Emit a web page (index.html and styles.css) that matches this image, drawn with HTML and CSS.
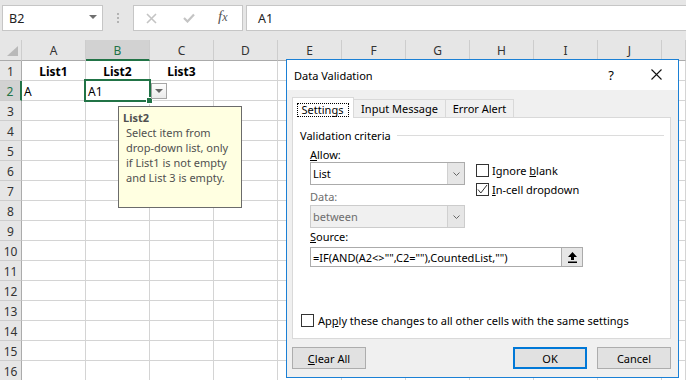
FILE: index.html
```html
<!DOCTYPE html>
<html>
<head>
<meta charset="utf-8">
<link rel="stylesheet" href="styles.css">
</head>
<body>
<div class="topbar">
  <div class="namebox"><span>B2</span><span class="nb-arrow"></span></div>
  <div class="grip"><i></i><i></i><i></i></div>
  <div class="fxbox">
    <svg class="ic-x" width="11" height="11" viewBox="0 0 11 11"><path d="M1 1L10 10M10 1L1 10" stroke="#c4c4c4" stroke-width="1.6" fill="none"/></svg>
    <svg class="ic-check" width="12" height="10" viewBox="0 0 12 10"><path d="M1 5L4.5 8.5L11 1.5" stroke="#c4c4c4" stroke-width="2.2" fill="none"/></svg>
    <span class="fx">f<span class="fx-x">x</span></span>
  </div>
  <div class="formula">A1</div>
</div>

<div class="sheet">
  <div class="corner"><svg width="21" height="20" viewBox="0 0 21 20"><polygon points="18,6 18,16 7,16" fill="#b9b9b9"/></svg></div>
  <div class="ch">A</div><div class="ch on">B</div><div class="ch">C</div><div class="ch">D</div><div class="ch">E</div><div class="ch">F</div><div class="ch">G</div><div class="ch">H</div><div class="ch">I</div><div class="ch">J</div><div class="ch"></div>

  <div class="rh">1</div><div class="c hd">List1</div><div class="c hd">List2</div><div class="c hd">List3</div><div class="c"></div><div class="c"></div><div class="c"></div><div class="c"></div><div class="c"></div><div class="c"></div><div class="c"></div><div class="c"></div>
  <div class="rh on">2</div><div class="c tx">A</div><div class="c tx">A1</div><div class="c"></div><div class="c"></div><div class="c"></div><div class="c"></div><div class="c"></div><div class="c"></div><div class="c"></div><div class="c"></div><div class="c"></div>
  <div class="rh">3</div><div class="c"></div><div class="c"></div><div class="c"></div><div class="c"></div><div class="c"></div><div class="c"></div><div class="c"></div><div class="c"></div><div class="c"></div><div class="c"></div><div class="c"></div>
  <div class="rh">4</div><div class="c"></div><div class="c"></div><div class="c"></div><div class="c"></div><div class="c"></div><div class="c"></div><div class="c"></div><div class="c"></div><div class="c"></div><div class="c"></div><div class="c"></div>
  <div class="rh">5</div><div class="c"></div><div class="c"></div><div class="c"></div><div class="c"></div><div class="c"></div><div class="c"></div><div class="c"></div><div class="c"></div><div class="c"></div><div class="c"></div><div class="c"></div>
  <div class="rh">6</div><div class="c"></div><div class="c"></div><div class="c"></div><div class="c"></div><div class="c"></div><div class="c"></div><div class="c"></div><div class="c"></div><div class="c"></div><div class="c"></div><div class="c"></div>
  <div class="rh">7</div><div class="c"></div><div class="c"></div><div class="c"></div><div class="c"></div><div class="c"></div><div class="c"></div><div class="c"></div><div class="c"></div><div class="c"></div><div class="c"></div><div class="c"></div>
  <div class="rh">8</div><div class="c"></div><div class="c"></div><div class="c"></div><div class="c"></div><div class="c"></div><div class="c"></div><div class="c"></div><div class="c"></div><div class="c"></div><div class="c"></div><div class="c"></div>
  <div class="rh">9</div><div class="c"></div><div class="c"></div><div class="c"></div><div class="c"></div><div class="c"></div><div class="c"></div><div class="c"></div><div class="c"></div><div class="c"></div><div class="c"></div><div class="c"></div>
  <div class="rh">10</div><div class="c"></div><div class="c"></div><div class="c"></div><div class="c"></div><div class="c"></div><div class="c"></div><div class="c"></div><div class="c"></div><div class="c"></div><div class="c"></div><div class="c"></div>
  <div class="rh">11</div><div class="c"></div><div class="c"></div><div class="c"></div><div class="c"></div><div class="c"></div><div class="c"></div><div class="c"></div><div class="c"></div><div class="c"></div><div class="c"></div><div class="c"></div>
  <div class="rh">12</div><div class="c"></div><div class="c"></div><div class="c"></div><div class="c"></div><div class="c"></div><div class="c"></div><div class="c"></div><div class="c"></div><div class="c"></div><div class="c"></div><div class="c"></div>
  <div class="rh">13</div><div class="c"></div><div class="c"></div><div class="c"></div><div class="c"></div><div class="c"></div><div class="c"></div><div class="c"></div><div class="c"></div><div class="c"></div><div class="c"></div><div class="c"></div>
  <div class="rh">14</div><div class="c"></div><div class="c"></div><div class="c"></div><div class="c"></div><div class="c"></div><div class="c"></div><div class="c"></div><div class="c"></div><div class="c"></div><div class="c"></div><div class="c"></div>
  <div class="rh">15</div><div class="c"></div><div class="c"></div><div class="c"></div><div class="c"></div><div class="c"></div><div class="c"></div><div class="c"></div><div class="c"></div><div class="c"></div><div class="c"></div><div class="c"></div>
  <div class="rh">16</div><div class="c"></div><div class="c"></div><div class="c"></div><div class="c"></div><div class="c"></div><div class="c"></div><div class="c"></div><div class="c"></div><div class="c"></div><div class="c"></div><div class="c"></div>
</div>

<div class="sel"></div>
<div class="handle"></div>
<div class="dd"><span class="dd-tri"></span></div>

<div class="tip">
  <div class="tip-title">List2</div>
  <div class="tip-body">Select item from<br>drop-down list, only<br>if List1 is not empty<br>and List 3 is empty.</div>
</div>

<div class="dialog">
  <div class="dlg-title">
    <span class="dlg-name">Data Validation</span>
    <span class="dlg-help">?</span>
    <svg class="dlg-close" width="11" height="11" viewBox="0 0 11 11"><path d="M0.5 0.5L10.5 10.5M10.5 0.5L0.5 10.5" stroke="#111" stroke-width="1.1" fill="none"/></svg>
  </div>
  <div class="dlg-body">
    <div class="tabs">
      <div class="tab active"><span class="focus">Settings</span></div>
      <div class="tab t2">Input Message</div>
      <div class="tab t3">Error Alert</div>
    </div>
    <div class="panel">
      <div class="group-head"><span>Validation criteria</span><span class="rule"></span></div>
      <div class="criteria">
        <div class="col-left">
          <div class="lbl"><u>A</u>llow:</div>
          <div class="combo"><span class="combo-val">List</span><span class="combo-btn"><svg width="7" height="4" viewBox="0 0 7 4"><path d="M0.5 0.5L3.5 3.5L6.5 0.5" stroke="#666" stroke-width="1" fill="none"/></svg></span></div>
          <div class="lbl dis lbl-data">Data:</div>
          <div class="combo dis combo-data"><span class="combo-val">between</span><span class="combo-btn"><svg width="7" height="4" viewBox="0 0 7 4"><path d="M0.5 0.5L3.5 3.5L6.5 0.5" stroke="#666" stroke-width="1" fill="none"/></svg></span></div>
        </div>
        <div class="col-right">
          <div class="chk chk1"><span class="box"></span><span>Ignore <u>b</u>lank</span></div>
          <div class="chk chk2"><span class="box"><svg width="11" height="11" viewBox="0 0 11 11"><path d="M1 5.5L3.8 9L10 1" stroke="#333" stroke-width="1" fill="none"/></svg></span><span><u>I</u>n-cell dropdown</span></div>
        </div>
      </div>
      <div class="lbl lbl-src"><u>S</u>ource:</div>
      <div class="source"><span class="src-text">=IF(AND(A2&lt;&gt;"",C2=""),CountedList,"")</span><span class="src-btn"><svg width="9" height="11" viewBox="0 0 9 11"><polygon points="4.5,0 9,5 6,5 6,8 3,8 3,5 0,5" fill="#000"/><rect x="0" y="9.5" width="9" height="1.5" fill="#000"/></svg></span></div>
      <div class="chk apply"><span class="box"></span><span>Ap<u>p</u>ly these changes to all other cells with the same settings</span></div>
    </div>
    <div class="buttons">
      <button class="btn"><u>C</u>lear All</button>
      <button class="btn primary">OK</button>
      <button class="btn cancel">Cancel</button>
    </div>
  </div>
</div>
</body>
</html>
```

FILE: styles.css
```css
* { box-sizing: border-box; }
html, body { margin: 0; padding: 0; }
body {
  width: 686px;
  height: 380px;
  overflow: hidden;
  background: #fff;
  font-family: "Noto Sans", "Open Sans", sans-serif;
  color: #000;
  position: relative;
}

/* formula bar */
.topbar {
  height: 40px;
  background: #e6e6e6;
  display: flex;
  align-items: flex-start;
  padding: 5px 0 0 2px;
}
.namebox {
  width: 101px;
  height: 26px;
  background: #fff;
  border: 1px solid #c6c6c6;
  display: flex;
  align-items: center;
  justify-content: space-between;
  padding: 0 5px 0 6px;
  font-size: 12.5px;
  color: #222;
}
.nb-arrow {
  width: 0;
  height: 0;
  border-left: 4px solid transparent;
  border-right: 4px solid transparent;
  border-top: 4px solid #6f6f6f;
  margin-bottom: 3px;
}
.grip {
  margin: 8px 0 0 14px;
  width: 3px;
  display: flex;
  flex-direction: column;
  gap: 2px;
}
.grip i { display: block; width: 2px; height: 2px; background: #b3b3b3; }
.fxbox {
  margin-left: 13px;
  width: 110px;
  height: 26px;
  background: #fff;
  border: 1px solid #c6c6c6;
  display: flex;
  align-items: center;
  padding-left: 12px;
}
.ic-check { margin-left: 26px; }
.fx {
  margin-left: 23px;
  font-family: "Liberation Serif", serif;
  font-style: italic;
  font-size: 15px;
  color: #555;
  margin-top: -3px;
}
.fx-x { font-size: 12px; }
.formula {
  margin-left: 3px;
  flex: 1;
  height: 26px;
  background: #fff;
  border: 1px solid #c6c6c6;
  border-right: none;
  display: flex;
  align-items: center;
  padding-left: 11px;
  font-size: 12.5px;
  color: #222;
}

/* grid */
.sheet {
  display: grid;
  grid-template-columns: 22px repeat(10, 64px) 1fr;
  grid-template-rows: 21px;
  grid-auto-rows: 20px;
  font-size: 12px;
}
.corner, .ch {
  background: #e6e6e6;
  border-right: 1px solid #cdcdcd;
  border-bottom: 1px solid #ababab;
}
.corner svg { display: block; }
.ch {
  display: flex;
  align-items: center;
  justify-content: center;
  color: #333;
  padding-top: 1px;
}
.ch.on {
  background: #d2d2d2;
  color: #217346;
  border-bottom: 2px solid #217346;
}
.rh {
  background: #e6e6e6;
  border-right: 1px solid #ababab;
  border-bottom: 1px solid #cdcdcd;
  display: flex;
  align-items: center;
  justify-content: center;
  color: #333;
  padding-top: 1px;
}
.rh.on {
  background: #d2d2d2;
  color: #217346;
  border-right: 2px solid #217346;
}
.c {
  border-right: 1px solid #d4d4d4;
  border-bottom: 1px solid #d4d4d4;
  display: flex;
  align-items: center;
  padding-top: 2px;
  color: #000;
}
.c.hd { justify-content: center; font-weight: bold; }
.c.tx { padding-left: 2px; }

/* overlays on the sheet */
.sel {
  position: absolute;
  left: 84px;
  top: 79px;
  width: 67px;
  height: 23px;
  border: 2px solid #217346;
}
.handle {
  position: absolute;
  left: 146px;
  top: 97px;
  width: 7px;
  height: 7px;
  background: #217346;
  border: 1px solid #fff;
}
.dd {
  position: absolute;
  left: 151px;
  top: 83px;
  width: 16px;
  height: 16px;
  border: 1px solid #a6a6a6;
  background: linear-gradient(#fdfdfd, #ebebeb);
  display: flex;
  align-items: center;
  justify-content: center;
}
.dd-tri {
  width: 0;
  height: 0;
  border-left: 4px solid transparent;
  border-right: 4px solid transparent;
  border-top: 4px solid #666;
}
.tip {
  position: absolute;
  left: 118px;
  top: 106px;
  width: 124px;
  height: 102px;
  background: #ffffe1;
  border: 1px solid #6b6b6b;
  padding: 3px 0 0 4px;
  font-size: 11px;
  line-height: 15px;
  color: #505050;
}
.tip-title { font-weight: bold; }
.tip-body { padding-left: 3px; }

/* dialog */
.dialog {
  position: absolute;
  left: 286px;
  top: 59px;
  width: 393px;
  height: 319px;
  border: 1px solid #1b80d5;
  background: #f0f0f0;
  display: flex;
  flex-direction: column;
  font-size: 11px;
}
.dlg-title {
  height: 30px;
  background: #fff;
  display: flex;
  align-items: center;
  padding-left: 7px;
  flex-shrink: 0;
}
.dlg-name { flex: 1; }
.dlg-help {
  width: 12px;
  text-align: center;
  font-size: 13px;
  margin-right: 34px;
  margin-top: -1px;
}
.dlg-close { margin-right: 16px; margin-top: -1px; }
.dlg-body {
  flex: 1;
  padding: 7px 7px 0 5px;
  display: flex;
  flex-direction: column;
}
.tabs {
  display: flex;
  align-items: flex-end;
  height: 20px;
}
.tab {
  height: 18px;
  border: 1px solid #d9d9d9;
  border-left: none;
  border-bottom: none;
  background: #f0f0f0;
  display: flex;
  align-items: center;
  justify-content: center;
  padding-bottom: 1px;
}
.tab.active {
  width: 62px;
  height: 21px;
  margin-bottom: -1px;
  background: #fff;
  border-left: 1px solid #d9d9d9;
  position: relative;
  z-index: 1;
  padding: 3px 0 0 0;
}
.tab.t2 { width: 92px; }
.tab.t3 { width: 68px; }
.focus {
  border: 1px dotted #000;
  line-height: 12px;
  padding: 0 5px 0 4px;
}
.panel {
  height: 222px;
  background: #fff;
  border: 1px solid #d9d9d9;
  display: flex;
  flex-direction: column;
  padding-bottom: 10px;
}
.group-head {
  margin-top: 10px;
  display: flex;
  align-items: center;
  padding: 0 6px 0 7px;
  line-height: 15px;
}
.rule { flex: 1; height: 1px; background: #dcdcdc; margin-left: 6px; }
.criteria {
  display: flex;
  padding-left: 17px;
}
.col-left { width: 155px; display: flex; flex-direction: column; }
.col-right { margin-left: 11px; display: flex; flex-direction: column; }
.lbl { line-height: 14px; margin-top: 5px; }
.lbl.dis { color: #6d6d6d; }
.lbl-src { margin: 2px 0 0 17px; }
.combo {
  height: 23px;
  border: 1px solid #ababab;
  background: #fff;
  display: flex;
  align-items: stretch;
}
.combo-val { flex: 1; display: flex; align-items: center; padding-left: 2px; }
.combo-btn {
  width: 17px;
  background: #e6e6e6;
  border-left: 1px solid #d0d0d0;
  display: flex;
  align-items: center;
  justify-content: center;
}
.combo.dis { background: #f0f0f0; border-color: #cccccc; color: #6d6d6d; }
.combo-data { margin-top: 1px; }
.chk { display: flex; align-items: center; height: 15px; gap: 3px; }
.chk1 { margin-top: 20px; }
.chk2 { margin-top: 4px; }
.box {
  width: 13px;
  height: 13px;
  border: 1px solid #333;
  background: #fff;
  display: flex;
  align-items: center;
  justify-content: center;
}
.box svg { display: block; }
.source {
  margin: 3px 0 0 17px;
  width: 273px;
  height: 20px;
  border: 1px solid #ababab;
  background: #fff;
  display: flex;
}
.src-text { flex: 1; display: flex; align-items: center; padding-left: 2px; }
.src-btn {
  width: 21px;
  background: #e6e6e6;
  border-left: 1px solid #adadad;
  display: flex;
  align-items: center;
  justify-content: center;
}
.apply { margin-top: auto; padding-left: 8px; gap: 4px; }
.buttons { display: flex; margin-top: 8px; }
.btn {
  width: 74px;
  height: 22px;
  background: #e1e1e1;
  border: 1px solid #adadad;
  font-family: inherit;
  font-size: 11px;
  color: #000;
  padding: 0;
}
.primary { margin-left: auto; border: 2px solid #0078d7; }
.cancel { margin-left: 10px; }
```
